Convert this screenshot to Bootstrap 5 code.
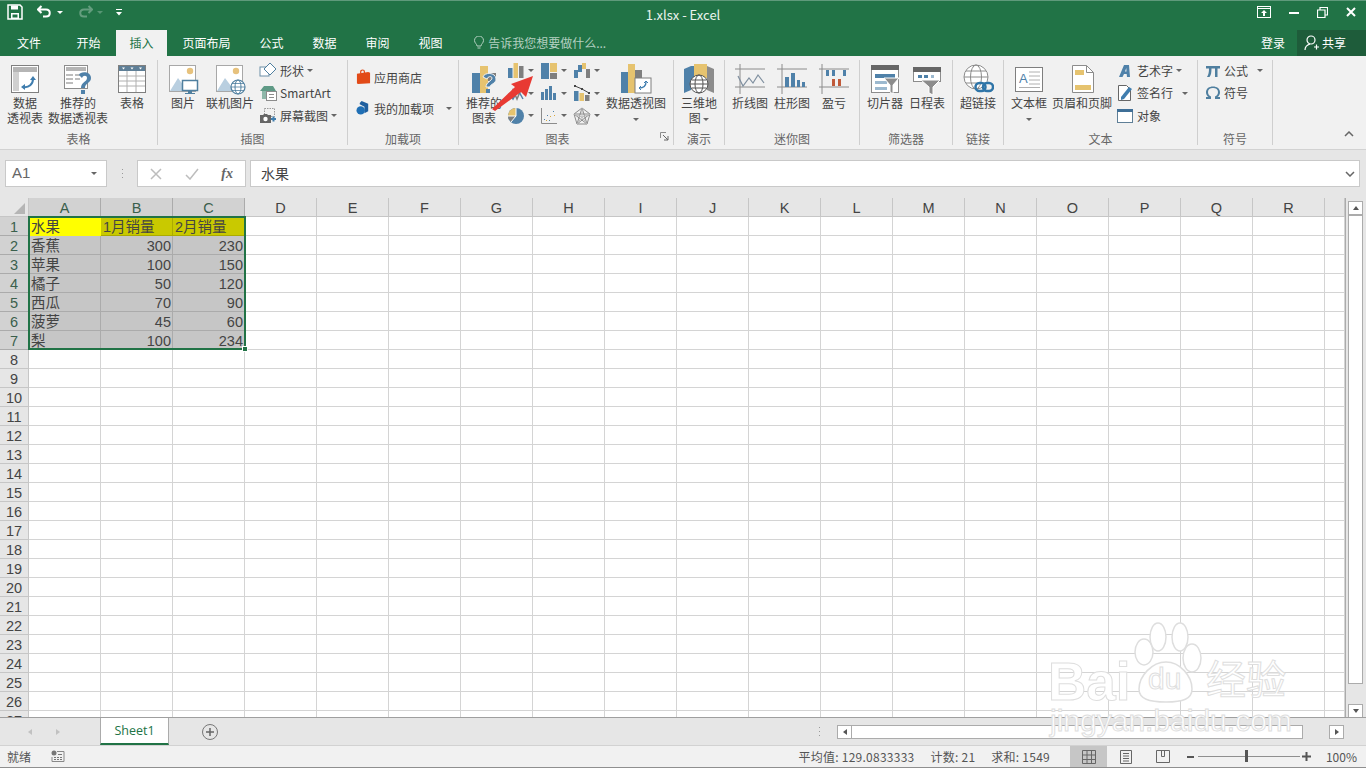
<!DOCTYPE html>
<html lang="zh-CN">
<head>
  <meta charset="UTF-8" />
  <meta name="viewport" content="width=device-width, initial-scale=1.0"/>
  <link href="https://cdn.jsdelivr.net/npm/bootstrap@5.3.5/dist/css/bootstrap.min.css" rel="stylesheet"/>
  <script src="https://cdn.jsdelivr.net/npm/bootstrap@5.3.5/dist/js/bootstrap.bundle.min.js"></script>
  <title>1.xlsx - Excel</title>
  <style>
    html, body { margin: 0; height: 100%; overflow: hidden; }
    body { background: #fff; font-family: "Noto Sans CJK SC", "Liberation Sans", sans-serif; font-size: 12px; color: #444; }
    .xl-app { width: 1366px; height: 768px; position: relative; overflow: hidden; }
    svg { display: block; flex: none; }

    /* title + tabs */
    .xl-title { height: 30px; background: #217346; color: #fff; border-top: 1px solid #5f9a7b; }
    .xl-side { flex: 1 1 0; padding-bottom: 7px; }
    .xl-qat { padding-left: 7px; }
    .xl-name { font-size: 13px; color: #eaf3ee; margin-right: 7px; padding-bottom: 2px; }
    .xl-ml2 { margin-left: 2px; } .xl-ml3 { margin-left: 3px; } .xl-ml5 { margin-left: 5px; } .xl-ml6 { margin-left: 6px; } .xl-ml9 { margin-left: 9px; }
    .xl-ml13 { margin-left: 13px; } .xl-ml14 { margin-left: 14px; } .xl-ml18 { margin-left: 18px; } .xl-ml20 { margin-left: 20px; } .xl-ml32 { margin-left: 32px; }
    .xl-mr10 { margin-right: 10px; }
    .xl-tabs { height: 26px; background: #217346; color: #fff; gap: 2px; }
    .xl-tab { padding: 0 13.5px; line-height: 24px; padding-top: 1px; }
    .xl-tab-file { padding-left: 17px; padding-right: 20px; }
    .xl-tab-on { background: #f1f1f1; color: #217346; }
    .xl-tell { color: #b4d0c1; margin-left: 15px; gap: 3px; }
    .xl-share { width: 69px; height: 26px; background: #1e5c3a; gap: 3px; padding-left: 7px; margin-left: 10px; }

    /* ribbon */
    .xl-ribbon { height: 94px; background: #f1f1f1; border-bottom: 1px solid #d2d2d2; padding-top: 4px; }
    .xl-group { height: 85px; border-right: 1px solid #cfcfcf; flex: none; }
    .xl-gbody { height: 72px; padding-top: 3px; }
    .xl-glabel { height: 13px; line-height: 13px; color: #666; text-align: center; }
    .rg-tables { width: 158px; } .rg-tables .xl-gbody { padding-left: 2px; }
    .rg-illus { width: 190px; } .rg-illus .xl-gbody { padding-left: 7px; }
    .rg-addin { width: 111px; } .rg-addin .xl-gbody { padding: 2px 0 0 8px; }
    .rg-charts { width: 215px; } .rg-charts .xl-gbody { padding-left: 4px; }
    .rg-tour { width: 51px; }
    .rg-spark { width: 135px; } .rg-spark .xl-gbody { padding-left: 4px; }
    .rg-filter { width: 93px; } .rg-filter .xl-gbody { padding-left: 4px; }
    .rg-link { width: 51px; }
    .rg-text { width: 194px; } .rg-text .xl-gbody { padding-left: 4px; }
    .rg-symbol { width: 75px; } .rg-symbol .xl-gbody { padding-left: 7px; }
    .xl-big { display: flex; flex-direction: column; align-items: center; line-height: 15px; text-align: center; flex: none; }
    .w-36 { width: 36px; } .w-42 { width: 42px; } .w-46 { width: 46px; } .w-48 { width: 48px; } .w-60 { width: 60px; }
    .xl-small { height: 22.5px; display: flex; align-items: center; white-space: nowrap; }
    .xl-small-col { margin-top: -3.5px; }
    .xl-addin-row { height: 31px; display: flex; align-items: center; gap: 3px; }
    .xl-caret { display: inline-block; width: 0; height: 0; border-left: 3px solid transparent; border-right: 3px solid transparent; border-top: 3px solid #666; flex: none; }
    .xl-caret-w { border-top-color: #fff; }
    .xl-chart-grid { display: grid; grid-template-columns: repeat(3, 33px); grid-auto-rows: 22.5px; margin-left: 2px; margin-top: -3.5px; }
    .xl-chart-grid > div { display: flex; align-items: center; gap: 3px; }

    /* formula bar */
    .xl-formula { height: 48px; background: #e6e6e6; padding: 10px 6px 0 5px; }
    .xl-box { height: 27px; background: #fff; border: 1px solid #c9c9c9; }
    .xl-namebox { width: 102px; padding: 0 9px 0 6px; font-size: 15px; color: #666; font-family: "Liberation Sans", sans-serif; }
    .xl-dots { width: 30px; height: 27px; }
    .xl-fxbox { width: 109px; padding: 0 12px 0 12px; }
    .xl-fx { font-family: "Liberation Serif", serif; font-style: italic; font-weight: 700; font-size: 14px; color: #666; }
    .xl-input { margin-left: 4px; flex: 1 1 0; padding: 0 4px 0 10px; font-size: 14px; color: #444; }

    /* sheet */
    .xl-sheet { height: 519px; position: relative; overflow: hidden; background: #e6e6e6; }
    .xl-cells { width: 1345px; height: 519px; overflow: hidden; background: #fff; position: relative; }
    .xl-grid { border-collapse: separate; border-spacing: 0; table-layout: fixed; font-family: "Liberation Sans", "Noto Sans CJK SC", sans-serif; font-size: 14.5px; color: #444; width: 1345px; }
    .xl-grid td, .xl-grid th { height: 19px; padding: 2px 1px 0 2px; border-right: 1px solid #d4d4d4; border-bottom: 1px solid #d4d4d4; line-height: 16px; font-weight: 400; white-space: nowrap; overflow: hidden; }
    .xl-grid th { background: #e6e6e6; text-align: center; padding: 2px 0 0 0; border-color: #c6c6c6; color: #444; }
    .xl-grid .xl-on { background: #d2d2d2; border-color: #ababab; color: #3a5f4c; }
    .xl-grid .xl-shade { background: #c6c6c6; border-color: #ababab; }
    .xl-grid .xl-y1 { background: #ff0; border-color: #ffff00; }
    .xl-grid .xl-y2 { background: #c9c900; border-color: #abab00; }
    .xl-grid td.xl-num { text-align: right; }
    .xl-corner { position: absolute; left: 14px; top: 5px; width: 0; height: 0; border-left: 11px solid transparent; border-bottom: 11px solid #b5b5b5; }
    .xl-sel { position: absolute; left: 28px; top: 18px; width: 218px; height: 134px; border: 2px solid #217346; pointer-events: none; }
    .xl-handle { position: absolute; right: -4px; bottom: -4px; width: 4px; height: 4px; background: #217346; border: 1px solid #fff; box-sizing: content-box; }
    .xl-vbar { width: 21px; padding: 3px 2px 0 2px; border-left: 1px solid #ababab; }
    .xl-arrow { width: 15px; height: 14px; background: #fff; border: 1px solid #ababab; display: flex; align-items: center; justify-content: center; flex: none; }
    .xl-up { border-left: 3px solid transparent; border-right: 3px solid transparent; border-bottom: 4px solid #555; }
    .xl-down { border-left: 3px solid transparent; border-right: 3px solid transparent; border-top: 4px solid #555; }
    .xl-left { border-top: 3px solid transparent; border-bottom: 3px solid transparent; border-right: 4px solid #555; }
    .xl-right { border-top: 3px solid transparent; border-bottom: 3px solid transparent; border-left: 4px solid #555; }
    .xl-vthumb { width: 15px; height: 469px; background: #fff; border: 1px solid #ababab; flex: none; }
    .xl-vtrack { height: 20px; flex: none; }

    /* sheet tabs + status */
    .xl-tabbar { height: 28px; background: #e6e6e6; border-top: 1px solid #9f9f9f; }
    .xl-nav { width: 100px; padding-left: 28px; gap: 24px; }
    .xl-sheet-tab { width: 69px; height: 27px; margin-top: -1px; background: #fff; color: #217346; border-left: 1px solid #ababab; border-right: 1px solid #ababab; border-bottom: 2px solid #217346; font-family: "Open Sans", "Liberation Sans", sans-serif; font-size: 12.5px; text-align: center; line-height: 25px; }
    .xl-hbar { margin-left: auto; padding-right: 22px; }
    .xl-hthumb { width: 451px; height: 14px; background: #fff; border: 1px solid #ababab; border-left: 0; }
    .xl-htrack { width: 26px; height: 14px; }
    .xl-status { height: 23px; background: #f1f1f1; border-top: 1px solid #d2d2d2; border-bottom: 1px solid #8f8f8f; padding-left: 7px; color: #555; }
    .xl-stats { margin-left: auto; gap: 16px; margin-right: 20px; letter-spacing: .25px; }
    .xl-view { width: 37px; height: 21px; display: flex; align-items: center; justify-content: center; }
    .xl-view-on { background: #c6c6c6; }
    .xl-slider { width: 102px; height: 1px; background: #8f8f8f; position: relative; margin: 0 2px 0 3px; }
    .xl-slider-thumb { position: absolute; left: 47px; top: -6px; width: 3px; height: 12px; background: #555; }
    .xl-zoom { width: 55px; text-align: right; padding-right: 9px; }

    /* overlays */
    .xl-arrow-mark { position: absolute; left: 488px; top: 72px; }
    .xl-mark { position: absolute; left: 1048px; top: 620px; width: 250px; height: 122px; pointer-events: none; }
    .xl-paw { position: absolute; left: 68px; top: 0; }
    .xl-mark-word { position: absolute; font-family: "Liberation Sans", sans-serif; color: #fff; -webkit-text-stroke: 1px #dedede; line-height: 1; white-space: nowrap; }
    .xl-mark-bai { left: 0; top: 35px; font-size: 53px; font-weight: 700; }
    .xl-mark-jy { left: 158px; top: 37px; font-size: 40px; font-family: "Noto Sans CJK SC", sans-serif; }
    .xl-mark-url { left: 2px; top: 86px; font-size: 30px; }
    .xl-mark-du { left: 100px; top: 44px; font-size: 30px; }
  </style>
</head>
<body>

<!-- icones -->
<svg width="0" height="0" class="position-absolute">
  <defs>
    <symbol id="i-pivot" viewBox="0 0 32 32"><rect x="2.5" y="2.5" width="27" height="27" fill="#fff" stroke="#7f7f7f"/><rect x="4" y="4" width="24" height="5" fill="#b5b5b5"/><rect x="4" y="9" width="6" height="19" fill="#d0d0d0"/><path d="M14 24c6 1 10-3 10-8" fill="none" stroke="#3f7dae" stroke-width="2"/><path d="M21 17l3-4 3 4zM16 21l-4 3 4 3z" fill="#3f7dae"/></symbol>
    <symbol id="i-recpivot" viewBox="0 0 32 32"><rect x="2.5" y="2.5" width="23" height="23" fill="#fff" stroke="#8c8c8c"/><rect x="4" y="4" width="20" height="4" fill="#b5b5b5"/><path d="M4 11h7v2H4zM4 15h7v2H4zM4 19h7v2H4zM13 11h9v2h-9zM13 15h5v2h-5z" fill="#bdbdbd"/><path d="M17 12c1-4 12-4 12 3 0 5-6 5-6 10h-4c0-6 6-6 6-10 0-3-4-3-5 0z" fill="#4f81a9"/><rect x="19" y="27" width="4" height="4" fill="#4f81a9"/></symbol>
    <symbol id="i-table" viewBox="0 0 32 32"><rect x="2.5" y="2.5" width="27" height="27" fill="#fff" stroke="#7f7f7f"/><rect x="3" y="3" width="26" height="5" fill="#5f7f97"/><path d="M6 4.500h3l-1.500 2zM14.500 4.500h3l-1.500 2zM23 4.500h3l-1.500 2z" fill="#fff"/><path d="M3 13h26M3 18h26M3 23h26M11 8v21M20 8v21" stroke="#b0b0b0" fill="none"/></symbol>
    <symbol id="i-picture" viewBox="0 0 32 32"><rect x="2.500" y="2.500" width="26" height="26" fill="#fff" stroke="#a8a8a8"/><circle cx="23" cy="8" r="3.200" fill="#e7c27d"/><path d="M3 28l8-13 6 8 3-3 7 8z" fill="#b9cfe0"/><rect x="15.500" y="17.500" width="15" height="10" fill="#fff" stroke="#4f7f9f" stroke-width="1.500"/><path d="M21 28h4v2h3v1h-10v-1h3z" fill="#4f7f9f"/></symbol>
    <symbol id="i-online" viewBox="0 0 32 32"><rect x="2.500" y="2.500" width="26" height="26" fill="#fff" stroke="#a8a8a8"/><circle cx="22" cy="8" r="3.200" fill="#e7c27d"/><path d="M3 28l8-13 6 8 3-3 7 8z" fill="#b9cfe0"/><circle cx="24" cy="24" r="7" fill="#fff" stroke="#4f7f9f" stroke-width="1.200"/><ellipse cx="24" cy="24" rx="3" ry="7" fill="none" stroke="#4f7f9f"/><path d="M17 24h14M18 20.500h12M18 27.500h12" stroke="#4f7f9f" fill="none" stroke-width=".8"/></symbol>
    <symbol id="i-shape" viewBox="0 0 18 18"><rect x="1" y="5" width="9" height="9" fill="#fff" stroke="#6d8fa8"/><path d="M11 1l6 6-6 6-6-6z" fill="#fff" stroke="#4f7f9f"/></symbol>
    <symbol id="i-smartart" viewBox="0 0 18 18"><path d="M1 7L5 2h9l3 5z" fill="#5f9a86"/><path d="M3 7h5v8H3z" fill="#8fb8aa"/><rect x="7.500" y="7.500" width="10" height="9" fill="#fff" stroke="#8c8c8c"/><path d="M10 10.500h5M10 13.500h5" stroke="#8c8c8c"/></symbol>
    <symbol id="i-shot" viewBox="0 0 18 18"><rect x="5.500" y="1.500" width="10" height="8" fill="none" stroke="#9a9a9a" stroke-dasharray="1.500 1"/><path d="M1 8h3l1-1h3l1 1h3v8H1z" fill="#666"/><circle cx="6.500" cy="12" r="2.200" fill="#fff"/><path d="M12 12h5M14.500 9.500v5" stroke="#3f7dae" stroke-width="2"/></symbol>
    <symbol id="i-store" viewBox="0 0 16 18"><path d="M1 5l12-2 2 1v11l-13 1-1-1z" fill="#e24a17"/><path d="M5 5V3a2 2 0 014 0v2" fill="none" stroke="#e24a17" stroke-width="1.300"/></symbol>
    <symbol id="i-addin" viewBox="0 0 16 18"><path d="M6 1l7 3v8l-4 2V7L4 4.500V3z" fill="#1f5f9f"/><circle cx="5" cy="11" r="4.500" fill="#1f6fb5"/></symbol>
    <symbol id="i-rec" viewBox="0 0 32 32"><rect x="4" y="10" width="8" height="20" fill="#4f81a9"/><rect x="12" y="3" width="8" height="27" fill="#e6c36f"/><rect x="20" y="10" width="8" height="8" fill="#7f7f7f"/><path d="M15 14c1-5 13-5 13 2 0 5-6 5-6 8h-4c0-5 6-6 6-9 0-2-4-2-5 1z" fill="#4f81a9" stroke="#f1f1f1"/><rect x="18" y="26" width="4" height="4" fill="#4f81a9"/></symbol>
    <symbol id="i-col" viewBox="0 0 18 18"><rect x="1" y="6" width="4.500" height="10" fill="#4f81a9"/><rect x="6.500" y="1" width="4.500" height="15" fill="#e6c36f"/><rect x="12" y="4" width="4.500" height="12" fill="#7f7f7f"/></symbol>
    <symbol id="i-tree" viewBox="0 0 18 18"><rect x="1" y="1" width="8" height="16" fill="#4f81a9"/><rect x="10" y="1" width="7" height="9" fill="#e6c36f"/><rect x="10" y="11" width="7" height="6" fill="#7f7f7f"/></symbol>
    <symbol id="i-water" viewBox="0 0 18 18"><rect x="1" y="8" width="4" height="8" fill="#4f81a9"/><rect x="5" y="3" width="4" height="7" fill="#4f81a9"/><rect x="9" y="1" width="4" height="6" fill="#e6c36f"/><rect x="13" y="7" width="4" height="9" fill="#7f7f7f"/></symbol>
    <symbol id="i-line" viewBox="0 0 18 18"><path d="M2 16l4-10 4 9 5-12" fill="none" stroke="#7f7f7f" stroke-width="1.500"/><path d="M2 9l4 6 5-9 5 9" fill="none" stroke="#4f81a9" stroke-width="1.500"/></symbol>
    <symbol id="i-hist" viewBox="0 0 18 18"><path d="M1 16V8h3v8zM5 16V5h3v11zM9 16V2h3v14zM13 16v-7h3v7z" fill="#4f81a9"/></symbol>
    <symbol id="i-combo" viewBox="0 0 18 18"><rect x="1" y="7" width="4.500" height="10" fill="#4f81a9"/><rect x="6.500" y="9" width="4.500" height="8" fill="#e6c36f"/><rect x="12" y="11" width="4.500" height="6" fill="#7f7f7f"/><path d="M2 2l7 3 7 4" fill="none" stroke="#444"/><path d="M1 1h2v2H1zM8 4h2v2H8zM15 8h2v2h-2z" fill="#444"/></symbol>
    <symbol id="i-pie" viewBox="0 0 18 18"><circle cx="9" cy="9" r="8" fill="#4f81a9"/><path d="M9 9V1a8 8 0 00-8 8z" fill="#e6c36f"/><path d="M9 9H1a8 8 0 003 6z" fill="#7f7f7f"/><path d="M9 1v8l-5 6M1 9h8" fill="none" stroke="#fff"/></symbol>
    <symbol id="i-scatter" viewBox="0 0 18 18"><path d="M1.500 1v15.500H17" fill="none" stroke="#8c8c8c"/><path d="M4 12h1v1H4zM7 8h1v1H7zM9 13h1v1H9zM13 4h1v1h-1z" fill="#4f81a9"/><path d="M6 13h1v1H6zM10 9h1v1h-1zM14 8h1v1h-1z" fill="#d8a93f"/></symbol>
    <symbol id="i-radar" viewBox="0 0 18 18"><path d="M9 1l8 6-3 10H4L1 7z" fill="none" stroke="#8c8c8c"/><path d="M9 1l5 16L1 7h16L4 17z" stroke="#8c8c8c" fill="none"/><path d="M9 1v9M17 7l-8 3M14 17l-5-7M4 17l5-7M1 7l8 3" stroke="#bdbdbd" fill="none"/></symbol>
    <symbol id="i-pchart" viewBox="0 0 32 32"><rect x="1" y="9" width="7" height="21" fill="#4f81a9"/><rect x="8" y="1" width="7" height="29" fill="#e6c36f"/><rect x="15" y="7" width="7" height="8" fill="#7f7f7f"/><rect x="15" y="15" width="16" height="15" fill="#fff" stroke="#7f7f7f"/><path d="M19 25c4 0 7-2 7-6" fill="none" stroke="#3f7dae" stroke-width="1.300"/><path d="M24 20l2-2 2 2M21 23l-2 2 2 2" fill="none" stroke="#3f7dae"/></symbol>
    <symbol id="i-map" viewBox="0 0 32 32"><path d="M1 6l7-3v24l-7 3z" fill="#4f81a9"/><path d="M8 3h7v16H8z" fill="#4f81a9"/><path d="M11 1h7v14h-7z" fill="#e6c36f"/><path d="M18 1h6v14h-6z" fill="#e6c36f"/><path d="M24 3l7 3v24l-7-3z" fill="#8c8c8c"/><circle cx="16" cy="21" r="9" fill="#fff" stroke="#555"/><ellipse cx="16" cy="21" rx="4" ry="9" fill="none" stroke="#555"/><path d="M7 21h18M8.500 17h15M8.500 25h15" stroke="#555" fill="none"/></symbol>
    <symbol id="i-sline" viewBox="0 0 32 32"><path d="M6 1v30M1 6h30M1 24h30" stroke="#8c8c8c" fill="none"/><path d="M4 13l5 10 6-8 4 5 5-8 6 8" fill="none" stroke="#7f8f9f" stroke-width="1.200"/></symbol>
    <symbol id="i-scol" viewBox="0 0 32 32"><path d="M6 1v30M1 6h30M1 24h30" stroke="#8c8c8c" fill="none"/><path d="M9 14h4v10H9zM15 10h4v14h-4zM21 17h3v7h-3zM26 19h3v5h-3z" fill="#4f81a9"/></symbol>
    <symbol id="i-swin" viewBox="0 0 32 32"><path d="M4 1v30M1 6h30M1 24h30" stroke="#8c8c8c" fill="none"/><path d="M8 7h3v6H8zM14 7h3v6h-3zM25 7h3v6h-3z" fill="#4f81a9"/><path d="M14 16h3v7h-3zM20 16h3v7h-3z" fill="#c05a3a"/></symbol>
    <symbol id="i-slicer" viewBox="0 0 32 32"><rect x="2.500" y="2.500" width="27" height="27" fill="#fff" stroke="#8c8c8c"/><rect x="2" y="2" width="28" height="5" fill="#666"/><rect x="6" y="11" width="20" height="4" fill="#4f81a9"/><rect x="6" y="18" width="12" height="3" fill="#9cb9cf"/><rect x="6" y="24" width="12" height="3" fill="#9cb9cf"/><path d="M15 15h15l-6 7v9l-3-2v-7z" fill="#8c8c8c" stroke="#fff"/></symbol>
    <symbol id="i-timeline" viewBox="0 0 32 32"><rect x="2.500" y="4.500" width="27" height="14" fill="#fff" stroke="#8c8c8c"/><rect x="2" y="4" width="28" height="5" fill="#666"/><path d="M7 12h4v3H7zM13 12h4v3h-4z" fill="#4f81a9"/><path d="M20 12h3v3h-3z" fill="#9cb9cf"/><path d="M10 17h19l-7 7v8l-4-2v-6z" fill="#8c8c8c" stroke="#fff"/></symbol>
    <symbol id="i-link" viewBox="0 0 32 32"><circle cx="14" cy="14" r="12" fill="#fff" stroke="#8c8c8c"/><ellipse cx="14" cy="14" rx="5.500" ry="12" fill="none" stroke="#8c8c8c"/><path d="M2 14h24M4 8h20M4 20h20" stroke="#8c8c8c" fill="none"/><rect x="13.500" y="20" width="10" height="8" rx="4" fill="none" stroke="#2f75a8" stroke-width="2.500"/><rect x="21" y="20" width="10" height="8" rx="4" fill="none" stroke="#2f75a8" stroke-width="2.500"/></symbol>
    <symbol id="i-textbox" viewBox="0 0 32 32"><rect x="2.500" y="4.500" width="27" height="24" fill="#fff" stroke="#7f7f7f"/><path d="M16 9h11M16 13h11M16 17h11M16 21h11M6 24.500h21" stroke="#b0b0b0" fill="none"/><text x="6" y="20" font-family="Liberation Sans, sans-serif" font-size="13" fill="#4f81a9">A</text></symbol>
    <symbol id="i-header" viewBox="0 0 32 32"><path d="M6.500 2.500h14l7 7v20h-21z" fill="#fff" stroke="#8c8c8c"/><path d="M20.500 2.500v7h7" fill="none" stroke="#8c8c8c"/><rect x="9" y="7" width="9" height="5" fill="#e6c36f"/><rect x="9" y="22" width="16" height="5" fill="#e6c36f"/></symbol>
    <symbol id="i-art" viewBox="0 0 16 16"><path d="M7 2h5l1 12h-3l-.3-3H7l-1.500 3H2zM8 8.500h1.500L9.300 5z" fill="#4f81a9"/></symbol>
    <symbol id="i-sign" viewBox="0 0 16 18"><path d="M1.500 1.500h8l4 4v11h-12z" fill="#fff" stroke="#666"/><path d="M4 13l8-10 3 2-8 10-3 1z" fill="#3f7dae"/></symbol>
    <symbol id="i-object" viewBox="0 0 16 16"><rect x=".500" y="1.500" width="15" height="13" fill="#fff" stroke="#5f7f97"/><rect x="0" y="1" width="16" height="3" fill="#3f6f97"/></symbol>
    <symbol id="i-pi" viewBox="0 0 16 16"><path d="M1 3h14v2.500h-2.500V14H10V5.500H6.500c0 4-.5 7-2 8.500H2c1.500-2 2-5 2-8.500H1z" fill="#4f7f9f"/></symbol>
    <symbol id="i-omega" viewBox="0 0 16 16"><path d="M1 14h5v-2.500C4 10.500 3 9 3 7c0-2.500 2-4 5-4s5 1.500 5 4c0 2-1 3.500-3 4.500V14h5v-2h-2.500c1.500-1 2.500-2.700 2.500-4.500C15 3.500 12 1.500 8 1.500S1 3.500 1 7.500C1 9.300 2 11 3.500 12H1z" fill="#4f7f9f"/></symbol>
  </defs>
</svg>

<div class="xl-app d-flex flex-column">

  <!-- barra de titulo -->
  <div class="xl-title d-flex align-items-center">
    <div class="xl-side d-flex align-items-center xl-qat">
      <svg width="16" height="16" viewBox="0 0 16 16"><path d="M1 1h12l2 2v12H1z" fill="none" stroke="#fff" stroke-width="1.500"/><path d="M4 1.500h7v4H4zM4 9h8v6H4z" fill="#fff"/><path d="M5.500 10.500h5v3h-5z" fill="#217346"/></svg>
      <svg class="xl-ml14" width="16" height="14" viewBox="0 0 16 14"><path d="M4.500 1L1 4.500 4.500 8M2 4.500h7c5 0 5 7 0 7H6" fill="none" stroke="#fff" stroke-width="2"/></svg>
      <span class="xl-caret xl-caret-w ms-1"></span>
      <svg class="xl-ml14" width="16" height="14" viewBox="0 0 16 14" opacity=".3"><path d="M11.500 1L15 4.500 11.500 8M14 4.500H7c-5 0-5 7 0 7h3" fill="none" stroke="#fff" stroke-width="2"/></svg>
      <span class="xl-caret xl-caret-w ms-1 opacity-25"></span>
      <svg class="xl-ml13" width="6" height="8" viewBox="0 0 6 8"><path d="M0 1h6v1H0zM0 4h6L3 7.500z" fill="#fff"/></svg>
    </div>
    <div class="xl-name">1.xlsx - Excel</div>
    <div class="xl-side d-flex align-items-center justify-content-end">
      <svg width="14" height="12" viewBox="0 0 14 12"><rect x=".5" y=".5" width="13" height="11" fill="none" stroke="#fff"/><path d="M1 2.500h12" stroke="#fff"/><path d="M7 4l3 3H8v3H6V7H4z" fill="#fff"/></svg>
      <svg class="xl-ml18" width="10" height="10" viewBox="0 0 10 10"><path d="M0 5h10v2H0z" fill="#fff"/></svg>
      <svg class="xl-ml18" width="11" height="11" viewBox="0 0 11 11"><path d="M3 2.500V.5h7.500V8H8.500M.5 3h7.500v7.500H.5z" fill="none" stroke="#fff" stroke-width="1.200"/></svg>
      <svg class="xl-ml18 xl-mr10" width="10" height="10" viewBox="0 0 10 10"><path d="M1 1l8 8M9 1l-8 8" stroke="#fff" stroke-width="2"/></svg>
    </div>
  </div>

  <!-- abas -->
  <div class="xl-tabs d-flex">
    <div class="xl-tab xl-tab-file">文件</div>
    <div class="xl-tab">开始</div>
    <div class="xl-tab xl-tab-on">插入</div>
    <div class="xl-tab">页面布局</div>
    <div class="xl-tab">公式</div>
    <div class="xl-tab">数据</div>
    <div class="xl-tab">审阅</div>
    <div class="xl-tab">视图</div>
    <div class="xl-tell d-flex align-items-center">
      <svg width="12" height="14" viewBox="0 0 12 14"><path d="M4 10c0-2-2.500-3-2.500-5.500a4.500 4.500 0 019 0C10.500 7 8 8 8 10zM4.500 12h3" fill="none" stroke="#b4d0c1"/></svg>
      <span>告诉我您想要做什么...</span>
    </div>
    <div class="ms-auto d-flex align-items-center">登录</div>
    <div class="xl-share d-flex align-items-center">
      <svg width="15" height="16" viewBox="0 0 15 16"><circle cx="7" cy="5" r="4" fill="none" stroke="#fff" stroke-width="1.200"/><path d="M1 15c0-3 2-5 5-6M10 12h5M12.500 9.500v5" fill="none" stroke="#fff" stroke-width="1.200"/></svg>
      <span>共享</span>
    </div>
  </div>

  <!-- faixa de opcoes -->
  <div class="xl-ribbon d-flex">
    <div class="xl-group rg-tables">
      <div class="xl-gbody d-flex">
        <div class="xl-big w-46"><svg width="32" height="32"><use href="#i-pivot"/></svg>数据<br>透视表</div>
        <div class="xl-big w-60"><svg width="32" height="32"><use href="#i-recpivot"/></svg>推荐的<br>数据透视表</div>
        <div class="xl-big w-48"><svg width="32" height="32"><use href="#i-table"/></svg>表格</div>
      </div>
      <div class="xl-glabel">表格</div>
    </div>

    <div class="xl-group rg-illus">
      <div class="xl-gbody d-flex">
        <div class="xl-big w-36"><svg width="32" height="32"><use href="#i-picture"/></svg>图片</div>
        <div class="xl-big w-48 xl-ml5"><svg width="32" height="32"><use href="#i-online"/></svg>联机图片</div>
        <div class="xl-small-col xl-ml5">
          <div class="xl-small"><svg width="18" height="18"><use href="#i-shape"/></svg><span class="xl-ml3">形状</span><span class="xl-caret xl-ml3"></span></div>
          <div class="xl-small"><svg width="18" height="18"><use href="#i-smartart"/></svg><span class="xl-ml3">SmartArt</span></div>
          <div class="xl-small"><svg width="18" height="18"><use href="#i-shot"/></svg><span class="xl-ml3">屏幕截图</span><span class="xl-caret xl-ml3"></span></div>
        </div>
      </div>
      <div class="xl-glabel">插图</div>
    </div>

    <div class="xl-group rg-addin">
      <div class="xl-gbody">
        <div class="xl-addin-row"><svg width="15" height="17"><use href="#i-store"/></svg><span>应用商店</span></div>
        <div class="xl-addin-row"><svg width="15" height="17"><use href="#i-addin"/></svg><span>我的加载项</span><span class="xl-caret xl-ml9"></span></div>
      </div>
      <div class="xl-glabel">加载项</div>
    </div>

    <div class="xl-group rg-charts">
      <div class="xl-gbody d-flex">
        <div class="xl-big w-42"><svg width="32" height="32"><use href="#i-rec"/></svg>推荐的<br>图表</div>
        <div class="xl-chart-grid">
          <div><svg width="18" height="18"><use href="#i-col"/></svg><span class="xl-caret"></span></div>
          <div><svg width="18" height="18"><use href="#i-tree"/></svg><span class="xl-caret"></span></div>
          <div><svg width="18" height="18"><use href="#i-water"/></svg><span class="xl-caret"></span></div>
          <div><svg width="18" height="18"><use href="#i-line"/></svg><span class="xl-caret"></span></div>
          <div><svg width="18" height="18"><use href="#i-hist"/></svg><span class="xl-caret"></span></div>
          <div><svg width="18" height="18"><use href="#i-combo"/></svg><span class="xl-caret"></span></div>
          <div><svg width="18" height="18"><use href="#i-pie"/></svg><span class="xl-caret"></span></div>
          <div><svg width="18" height="18"><use href="#i-scatter"/></svg><span class="xl-caret"></span></div>
          <div><svg width="18" height="18"><use href="#i-radar"/></svg><span class="xl-caret"></span></div>
        </div>
        <div class="xl-big w-60"><svg width="32" height="32"><use href="#i-pchart"/></svg>数据透视图<span class="xl-caret mt-2"></span></div>
      </div>
      <div class="xl-glabel d-flex">
        <span class="flex-grow-1">图表</span>
        <svg class="ms-1 me-1" width="9" height="9" viewBox="0 0 9 9"><path d="M.5 6V.5H6" fill="none" stroke="#8c8c8c"/><path d="M3 3l5 5M8 4v4H4" fill="none" stroke="#666"/></svg>
      </div>
    </div>

    <div class="xl-group rg-tour">
      <div class="xl-gbody"><div class="xl-big"><svg width="32" height="32"><use href="#i-map"/></svg>三维地<br><span>图 <span class="xl-caret align-middle"></span></span></div></div>
      <div class="xl-glabel">演示</div>
    </div>

    <div class="xl-group rg-spark">
      <div class="xl-gbody d-flex">
        <div class="xl-big w-42"><svg width="32" height="32"><use href="#i-sline"/></svg>折线图</div>
        <div class="xl-big w-42"><svg width="32" height="32"><use href="#i-scol"/></svg>柱形图</div>
        <div class="xl-big w-42"><svg width="32" height="32"><use href="#i-swin"/></svg>盈亏</div>
      </div>
      <div class="xl-glabel">迷你图</div>
    </div>

    <div class="xl-group rg-filter">
      <div class="xl-gbody d-flex">
        <div class="xl-big w-42"><svg width="32" height="32"><use href="#i-slicer"/></svg>切片器</div>
        <div class="xl-big w-42"><svg width="32" height="32"><use href="#i-timeline"/></svg>日程表</div>
      </div>
      <div class="xl-glabel">筛选器</div>
    </div>

    <div class="xl-group rg-link">
      <div class="xl-gbody"><div class="xl-big"><svg width="32" height="32"><use href="#i-link"/></svg>超链接</div></div>
      <div class="xl-glabel">链接</div>
    </div>

    <div class="xl-group rg-text">
      <div class="xl-gbody d-flex">
        <div class="xl-big w-42"><svg width="32" height="32"><use href="#i-textbox"/></svg>文本框<span class="xl-caret mt-2"></span></div>
        <div class="xl-big w-60 xl-ml2"><svg width="32" height="32"><use href="#i-header"/></svg>页眉和页脚</div>
        <div class="xl-small-col xl-ml5">
          <div class="xl-small"><svg width="16" height="16"><use href="#i-art"/></svg><span class="ms-1">艺术字</span><span class="xl-caret xl-ml3"></span></div>
          <div class="xl-small"><svg width="16" height="18"><use href="#i-sign"/></svg><span class="ms-1">签名行</span><span class="xl-caret xl-ml9"></span></div>
          <div class="xl-small"><svg width="16" height="16"><use href="#i-object"/></svg><span class="ms-1">对象</span></div>
        </div>
      </div>
      <div class="xl-glabel">文本</div>
    </div>

    <div class="xl-group rg-symbol">
      <div class="xl-gbody">
        <div class="xl-small-col">
          <div class="xl-small"><svg width="16" height="16"><use href="#i-pi"/></svg><span class="xl-ml3">公式</span><span class="xl-caret xl-ml9"></span></div>
          <div class="xl-small"><svg width="16" height="16"><use href="#i-omega"/></svg><span class="xl-ml3">符号</span></div>
        </div>
      </div>
      <div class="xl-glabel">符号</div>
    </div>

    <div class="flex-grow-1 d-flex justify-content-end align-items-end pb-2 pe-2">
      <svg class="mb-1 me-1" width="10" height="6" viewBox="0 0 10 6"><path d="M1 5l4-4 4 4" fill="none" stroke="#666" stroke-width="1.500"/></svg>
    </div>
  </div>

  <!-- barra de formulas -->
  <div class="xl-formula d-flex">
    <div class="xl-box xl-namebox d-flex align-items-center justify-content-between"><span>A1</span><span class="xl-caret"></span></div>
    <div class="xl-dots d-flex align-items-center justify-content-center"><svg width="3" height="11" viewBox="0 0 3 11"><path d="M1 1h1v1H1zM1 5h1v1H1zM1 9h1v1H1z" fill="#999"/></svg></div>
    <div class="xl-box xl-fxbox d-flex align-items-center justify-content-between">
      <svg width="12" height="12" viewBox="0 0 12 12"><path d="M1 1l10 10M11 1L1 11" stroke="#bdbdbd" stroke-width="1.500"/></svg>
      <svg width="14" height="12" viewBox="0 0 14 12"><path d="M1 7l4 4 8-10" fill="none" stroke="#bdbdbd" stroke-width="1.500"/></svg>
      <span class="xl-fx">fx</span>
    </div>
    <div class="xl-box xl-input d-flex align-items-center justify-content-between">
      <span>水果</span>
      <svg width="10" height="6" viewBox="0 0 10 6"><path d="M1 1l4 4 4-4" fill="none" stroke="#666" stroke-width="1.500"/></svg>
    </div>
  </div>

  <!-- planilha -->
  <div class="xl-sheet d-flex">
    <div class="xl-cells">
      <table class="xl-grid" id="grid"></table>
      <div class="xl-corner"></div>
      <div class="xl-sel"><div class="xl-handle"></div></div>
    </div>
    <div class="xl-vbar d-flex flex-column">
      <div class="xl-arrow"><span class="xl-up"></span></div>
      <div class="xl-vthumb"></div>
      <div class="xl-vtrack"></div>
      <div class="xl-arrow"><span class="xl-down"></span></div>
    </div>
  </div>

  <!-- abas de planilha -->
  <div class="xl-tabbar d-flex align-items-center">
    <div class="xl-nav d-flex align-items-center">
      <span class="xl-left opacity-25"></span>
      <span class="xl-right opacity-25"></span>
    </div>
    <div class="xl-sheet-tab">Sheet1</div>
    <svg class="xl-ml32" width="18" height="18" viewBox="0 0 18 18"><circle cx="9" cy="9" r="7.500" fill="none" stroke="#777"/><path d="M5 9h8M9 5v8" stroke="#666" stroke-width="1.500"/></svg>
    <div class="xl-hbar d-flex align-items-center">
      <svg class="me-3" width="3" height="11" viewBox="0 0 3 11"><path d="M1 1h1v1H1zM1 5h1v1H1zM1 9h1v1H1z" fill="#999"/></svg>
      <div class="xl-arrow"><span class="xl-left"></span></div>
      <div class="xl-hthumb"></div>
      <div class="xl-htrack"></div>
      <div class="xl-arrow"><span class="xl-right"></span></div>
    </div>
  </div>

  <!-- barra de status -->
  <div class="xl-status d-flex align-items-center">
    <span>就绪</span>
    <svg class="xl-ml20" width="14" height="13" viewBox="0 0 14 13"><circle cx="3" cy="3" r="2.500" fill="#777"/><path d="M6 1.500h7v10H1V7" fill="none" stroke="#888"/><path d="M3 7h2v1H3zM6 7h2v1H6zM9 7h2v1H9zM3 9h2v1H3zM6 9h2v1H6zM9 9h2v1H9zM7 4h4v1H7z" fill="#777"/></svg>
    <div class="xl-stats d-flex">
      <span>平均值: 129.0833333</span><span>计数: 21</span><span>求和: 1549</span>
    </div>
    <div class="xl-view xl-view-on"><svg width="14" height="14" viewBox="0 0 14 14"><path d="M.5.500h13v13H.5zM.5 5h13M.5 9.500h13M5 .5v13M9.500 .5v13" fill="none" stroke="#666"/></svg></div>
    <div class="xl-view"><svg width="12" height="14" viewBox="0 0 12 14"><path d="M.5.500h11v13H.5zM3 3.500h6M3 6h6M3 8.500h6M3 11h6" fill="none" stroke="#666"/></svg></div>
    <div class="xl-view"><svg width="14" height="13" viewBox="0 0 14 13"><path d="M.5.500h13v12H.5zM5.500.5v6h3v-6" fill="none" stroke="#666"/></svg></div>
    <svg class="xl-ml6" width="8" height="2" viewBox="0 0 8 2"><path d="M0 0h7v2H0z" fill="#555"/></svg>
    <div class="xl-slider"><div class="xl-slider-thumb"></div></div>
    <svg width="9" height="9" viewBox="0 0 9 9"><path d="M0 3.500h9v2H0zM3.500 0h2v9h-2z" fill="#555"/></svg>
    <div class="xl-zoom">100%</div>
  </div>

  <!-- seta vermelha -->
  <svg class="xl-arrow-mark" width="50" height="46" viewBox="0 0 50 46"><path d="M45 4L38 25 33 20 7 39 4 37 27 15 23 12z" fill="#e83a33"/></svg>

  <!-- marca d'agua -->
  <div class="xl-mark">
    <svg class="xl-paw" width="110" height="100" viewBox="0 0 110 100" fill="#fff" stroke="#dedede" stroke-width="1.500">
      <ellipse cx="28" cy="32" rx="9" ry="13"/>
      <ellipse cx="42" cy="17" rx="8" ry="14"/>
      <ellipse cx="64" cy="17" rx="8" ry="14"/>
      <ellipse cx="76" cy="38" rx="9" ry="14"/>
      <path d="M50 42c14 0 26 14 26 27 0 10-9 13-26 13s-27-3-27-13c0-13 13-27 27-27z"/>
    </svg>
    <span class="xl-mark-word xl-mark-bai">Bai</span>
    <span class="xl-mark-word xl-mark-du">du</span>
    <span class="xl-mark-word xl-mark-jy">经验</span>
    <span class="xl-mark-word xl-mark-url">jingyan.baidu.com</span>
  </div>
</div>

<script>
  // monta a grade de celulas
  const colunas = "ABCDEFGHIJKLMNOPQRS".split("");
  const dados = [
    ["水果", "1月销量", "2月销量"],
    ["香蕉", 300, 230],
    ["苹果", 100, 150],
    ["橘子", 50, 120],
    ["西瓜", 70, 90],
    ["菠萝", 45, 60],
    ["梨", 100, 234]
  ];

  let html = '<colgroup><col style="width:29px">';
  colunas.forEach(function (c, i) {
    html += '<col style="width:' + (i === 18 ? 20 : 72) + 'px">';
  });
  html += "</colgroup><tr><th></th>";
  colunas.forEach(function (c, i) {
    html += '<th class="' + (i < 3 ? "xl-on" : "") + '">' + (i === 18 ? "" : c) + "</th>";
  });
  html += "</tr>";

  for (let r = 1; r <= 27; r++) {
    html += '<tr><th class="' + (r <= 7 ? "xl-on" : "") + '">' + r + "</th>";
    colunas.forEach(function (c, i) {
      let classe = "";
      let valor = "";
      if (r <= 7 && i < 3) {
        valor = dados[r - 1][i];
        if (r === 1) classe = i === 0 ? "xl-y1" : "xl-y2";
        else classe = "xl-shade";
        if (typeof valor === "number") classe += " xl-num";
      }
      html += '<td class="' + classe + '">' + valor + "</td>";
    });
    html += "</tr>";
  }
  document.getElementById("grid").innerHTML = html;
</script>
</body>
</html>
